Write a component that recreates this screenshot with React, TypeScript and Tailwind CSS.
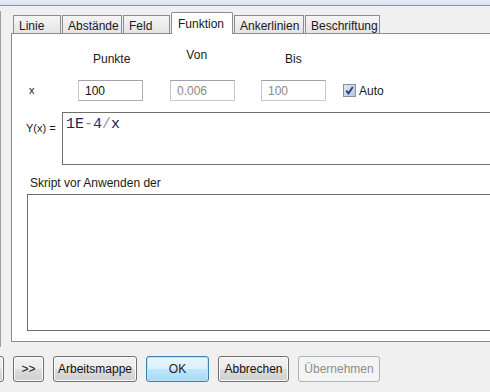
import React from "react";

const tabs = [
  { label: "Linie", w: "w-[48px]" },
  { label: "Abstände", w: "w-[60px]" },
  { label: "Feld", w: "w-[47px]" },
  { label: "Funktion", w: "w-[62px]", active: true },
  { label: "Ankerlinien", w: "w-[70px]" },
  { label: "Beschriftung", w: "w-[75px]" },
];

function Btn({ children, w, variant }: { children: React.ReactNode; w: string; variant?: "default" | "disabled" }) {
  const base = "h-[26px] shrink-0 rounded-[3px] border text-[12px] flex items-center justify-center";
  if (variant === "default")
    return (
      <div className={`${base} ${w} border-[#3c7fb1] bg-[linear-gradient(#eaf6fd_0%,#d9f0fc_50%,#bee6fd_51%,#a7d9f5_100%)] shadow-[inset_0_0_0_1px_#b9e3f8] text-[#222]`}>
        {children}
      </div>
    );
  if (variant === "disabled")
    return <div className={`${base} ${w} border-[#adb2b5] bg-[#f4f4f4] text-[#8d8d8d]`}>{children}</div>;
  return (
    <div className={`${base} ${w} border-[#707070] bg-[linear-gradient(#f2f2f2_0%,#ebebeb_50%,#dddddd_51%,#cfcfcf_100%)] shadow-[inset_0_0_0_1px_#fcfcfc] text-[#111]`}>
      {children}
    </div>
  );
}

function Field({ value, disabled }: { value: string; disabled?: boolean }) {
  return (
    <div
      className={`w-[65px] h-[21px] border border-[#abadb3] border-t-[#a0a3aa] border-l-[#c4c6cb] bg-white px-[6px] flex items-center text-[12px] ${
        disabled ? "text-[#8a8a8a] border-[#c9c9c9]" : "text-[#111]"
      }`}
    >
      {value}
    </div>
  );
}

export default function App() {
  return (
    <div className="w-[490px] h-[392px] overflow-hidden bg-[#f0f0f0] font-['Liberation_Sans',Arial,sans-serif] text-[#1a1a1a]">
      <div className="h-[6px] bg-[linear-gradient(#e4edf6,#d6e2ef)] border-b border-[#8e9298]" />
      <div className="flex">
        <div className="w-[3px] h-[336px] mt-[5px] border-r border-t border-[#a0a0a0] rounded-tr-[3px]" />
        <div className="ml-[10px] mt-[6px] w-[500px]">
          <div className="flex items-end h-[21px] pl-[2px] gap-[1px]">
            {tabs.map((t) =>
              t.active ? (
                <div
                  key={t.label}
                  className={`${t.w} h-[22px] -mb-[1px] relative z-10 bg-white border border-b-0 border-[#898c95] rounded-t-[2px] pl-[6px] pt-[2px] text-[12px]`}
                >
                  {t.label}
                </div>
              ) : (
                <div
                  key={t.label}
                  className={`${t.w} h-[18px] bg-[linear-gradient(#f5f5f5,#e4e4e4)] border border-b-0 border-[#898c95] pl-[5px] pt-[1px] text-[12px]`}
                >
                  {t.label}
                </div>
              )
            )}
          </div>
          <div className="h-[309px] bg-white border border-[#898c95] flex flex-col">
            <div className="flex h-[30px] items-center mt-[10px] text-[12px]">
              <span className="ml-[81px]">Punkte</span>
              <span className="ml-[56px] -mt-[8px]">Von</span>
              <span className="ml-[78px]">Bis</span>
            </div>
            <div className="flex items-center mt-[6px] text-[12px]">
              <span className="ml-[17px] w-[49px] text-[11px]">x</span>
              <Field value="100" />
              <div className="w-[27px]" />
              <Field value="0.006" disabled />
              <div className="w-[26px]" />
              <Field value="100" disabled />
              <div className="ml-[17px] flex items-center gap-[3px]">
                <div className="w-[13px] h-[13px] border border-[#8e8f8f] bg-[linear-gradient(135deg,#dfe8f5,#b7c8e0)] flex items-center justify-center">
                  <svg viewBox="0 0 11 11" className="w-[11px] h-[11px]">
                    <path d="M2.2 5.6 L4.5 8.4 L8.8 2" fill="none" stroke="#2a3f87" strokeWidth="1.9" />
                  </svg>
                </div>
                <span>Auto</span>
              </div>
            </div>
            <div className="flex mt-[11px]">
              <span className="ml-[14px] w-[36px] mt-[8px] text-[11px] whitespace-nowrap">Y(x) =</span>
              <div className="w-[440px] h-[53px] border border-[#6f6f6f] bg-white pl-[3px] pt-[2px] font-['Liberation_Mono',monospace] text-[15px] leading-[20px]">
                <span className="text-[#20205a]">1E</span>
                <span className="text-[#8080a0]">-</span>
                <span className="text-[#2a2a90]">4</span>
                <span className="text-[#9a9a9a]">/</span>
                <span className="text-[#20205a]">x</span>
              </div>
            </div>
            <div className="ml-[18px] mt-[11px] text-[12px] leading-[15px]">Skript vor Anwenden der</div>
            <div className="ml-[15px] mt-[3px] w-[470px] h-[137px] border border-[#6f6f6f] bg-white" />
          </div>
        </div>
      </div>
      <div className="flex items-center gap-[9px] mt-[9px] -ml-[10px]">
        <Btn w="w-[14px]">{""}</Btn>
        <Btn w="w-[31px]">&gt;&gt;</Btn>
        <Btn w="w-[84px]">Arbeitsmappe</Btn>
        <Btn w="w-[63px]" variant="default">OK</Btn>
        <Btn w="w-[71px]">Abbrechen</Btn>
        <Btn w="w-[82px]" variant="disabled">Übernehmen</Btn>
      </div>
    </div>
  );
}
